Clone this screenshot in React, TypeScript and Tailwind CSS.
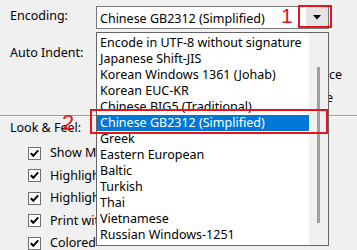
import * as React from 'react'

const encodings = [
  'Encode in UTF-8 without signature',
  'Japanese Shift-JIS',
  'Korean Windows 1361 (Johab)',
  'Korean EUC-KR',
  'Chinese BIG5 (Traditional)',
  'Chinese GB2312 (Simplified)',
  'Greek',
  'Eastern European',
  'Baltic',
  'Turkish',
  'Thai',
  'Vietnamese',
  'Russian Windows-1251',
]

const lookFeel = [
  'Show Margin',
  'Highlight Current Line',
  'Highlight Matching Braces',
  'Print with Line Numbers',
  'Colored Editor Face',
]

const Check = () => (
  <div className="w-[13px] h-[13px] border border-[#6e6e6e] bg-white flex items-center justify-center shrink-0">
    <svg width="11" height="11" viewBox="0 0 11 11">
      <polyline points="1.8,5.2 4.3,7.8 9.2,2.4" fill="none" stroke="#000" strokeWidth="2" />
    </svg>
  </div>
)

export default function App() {
  const selected = 5

  return (
    <div className="relative w-[357px] h-[250px] overflow-hidden bg-[#f0f0f0] text-[12.5px] text-black font-['Noto_Sans',sans-serif] pt-[6px]">
      {/* Encoding row */}
      <div className="flex items-start">
        <div className="w-[96px] pl-[10px] mt-[2px] leading-[16px]">Encoding:</div>
        <div className="w-[233px] h-[23px] border border-[#7a7a7a] bg-white flex items-center">
          <div className="flex-1 pl-[3px] leading-[16px] pt-[2px]">Chinese GB2312 (Simplified)</div>
          <div className="w-[22px] h-[21px] bg-[#e5e5e5] flex items-center justify-center">
            <svg width="8" height="5" viewBox="0 0 8 5">
              <polygon points="0,0 8,0 4,4.5" fill="#000" />
            </svg>
          </div>
        </div>
      </div>

      {/* Auto indent (options mostly hidden under the open list) */}
      <div className="flex mt-[16px]">
        <div className="w-[96px] pl-[10px] leading-[16px]">Auto Indent:</div>
        <div className="ml-[233px] w-[13px] flex flex-col pt-[22px] gap-[7px] leading-[16px] overflow-hidden">
          <div className="flex justify-end whitespace-nowrap">
            <span>Indent with space</span>
          </div>
          <div className="flex justify-end whitespace-nowrap mr-[9px]">
            <span>Like line above</span>
          </div>
        </div>
      </div>

      {/* separator */}
      <div className="mt-[9px] h-px bg-[#a0a0a0]" />
      <div className="h-px bg-white" />

      {/* Look & feel */}
      <div className="pl-[10px] mt-[3px] leading-[16px]">Look &amp; Feel:</div>
      <div className="mt-[6px] flex flex-col">
        {lookFeel.map((label) => (
          <div key={label} className="h-[22.5px] flex items-center pl-[28px]">
            <Check />
            <span className="ml-[9px] w-[46px] overflow-hidden leading-[16px] whitespace-nowrap">{label}</span>
          </div>
        ))}
      </div>

      {/* Open dropdown list */}
      <div className="absolute left-[96px] top-[32px] w-[233px] h-[214px] border border-[#646464] bg-white flex">
        <div className="flex-1 pt-[2px]">
          {encodings.map((e, i) => (
            <div
              key={e}
              className={`h-[16px] leading-[16px] pl-[3px] whitespace-nowrap ${
                i === selected ? 'bg-[#0078d7] text-white' : ''
              }`}
            >
              {e}
            </div>
          ))}
        </div>
        <div className="w-[19px] bg-[#f0f0f0] flex flex-col items-center pt-[34px]">
          <div className="w-[3px] h-[156px] bg-[#a0a0a0]" />
        </div>
      </div>

      {/* Annotations */}
      <div className="absolute left-[298px] top-[5px] w-[34px] h-[23px] border-2 border-[#e8131b]" />
      <div className="absolute left-[281px] top-[5px] text-[21px] leading-none text-[#e8131b] font-['Liberation_Sans',sans-serif]">1</div>
      <div className="absolute left-[90px] top-[109px] w-[238px] h-[25px] border-2 border-[#e8131b]" />
      <div className="absolute left-[62px] top-[112px] text-[22px] leading-none text-[#e8131b] font-['Liberation_Sans',sans-serif]">2</div>
    </div>
  )
}
